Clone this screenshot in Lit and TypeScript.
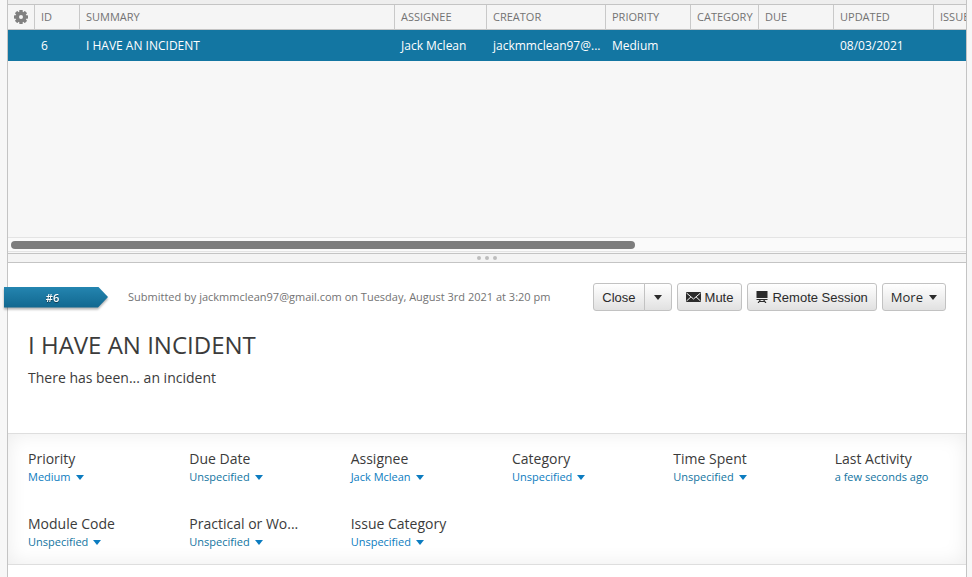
import { LitElement, html, css, svg, nothing } from "lit";
import { customElement } from "lit/decorators.js";

interface Column {
  title: string;
  value: string;
  width: number;
}

interface Field {
  label: string;
  value: string;
  tone: "bright" | "deep";
  menu: boolean;
}

const COLUMNS: Column[] = [
  { title: "ID", value: "6", width: 45 },
  { title: "SUMMARY", value: "I HAVE AN INCIDENT", width: 315 },
  { title: "ASSIGNEE", value: "Jack Mclean", width: 92 },
  { title: "CREATOR", value: "jackmmclean97@...", width: 119 },
  { title: "PRIORITY", value: "Medium", width: 85 },
  { title: "CATEGORY", value: "", width: 68 },
  { title: "DUE", value: "", width: 75 },
  { title: "UPDATED", value: "08/03/2021", width: 100 },
  { title: "ISSUE CATEGORY", value: "", width: 530 },
];

const FIELDS: Field[] = [
  { label: "Priority", value: "Medium", tone: "bright", menu: true },
  { label: "Due Date", value: "Unspecified", tone: "deep", menu: true },
  { label: "Assignee", value: "Jack Mclean", tone: "bright", menu: true },
  { label: "Category", value: "Unspecified", tone: "bright", menu: true },
  { label: "Time Spent", value: "Unspecified", tone: "deep", menu: true },
  { label: "Last Activity", value: "a few seconds ago", tone: "deep", menu: false },
  { label: "Module Code", value: "Unspecified", tone: "deep", menu: true },
  { label: "Practical or Wo...", value: "Unspecified", tone: "deep", menu: true },
  { label: "Issue Category", value: "Unspecified", tone: "bright", menu: true },
];

const TEETH = [0, 45, 90, 135, 180, 225, 270, 315];

const gearIcon = html`<svg class="gear" width="14" height="14" viewBox="0 0 14 14" aria-hidden="true">
  ${TEETH.map((a) => svg`<rect x="5.3" y="0" width="3.4" height="4" rx="0.6" transform="rotate(${a} 7 7)"></rect>`)}
  <circle cx="7" cy="7" r="3.7" fill="none" stroke="currentColor" stroke-width="3.4"></circle>
</svg>`;

const mailIcon = html`<svg width="15" height="10" viewBox="0 0 15 10" aria-hidden="true">
  <rect width="15" height="10" fill="#2b2b2b"></rect>
  <path d="M0.5 1 L7.5 7 L14.5 1 M0.5 9 L5 4.8 M14.5 9 L10 4.8" fill="none" stroke="#f4f4f4" stroke-width="1"></path>
</svg>`;

const screenIcon = html`<svg width="12" height="12" viewBox="0 0 11 12" aria-hidden="true">
  <path d="M0 0H11V7H0Z M0 8H11V9H0Z M3 9H4.4L3.6 10H7.4L6.6 9H8L10 12H8.6L8 11H3L2.4 12H1Z" fill="#2b2b2b"></path>
</svg>`;

const caret = html`<svg class="caret" width="8" height="5" viewBox="0 0 8 5" aria-hidden="true">
  <path d="M0 0H8L4 5Z" fill="currentColor"></path>
</svg>`;

@customElement("app-root")
export class AppRoot extends LitElement {
  static styles = css`
    :host {
      display: block;
      min-height: 100vh;
      box-sizing: border-box;
      padding: 0 5px 0 7px;
      background: #f7f7f7;
      color: #3b3b3b;
      font-family: "Open Sans", "Noto Sans", sans-serif;
    }
    .frame {
      display: flex;
      flex-direction: column;
      min-height: 100vh;
      box-sizing: border-box;
      border: solid #c4c4c4;
      border-width: 0 1px;
    }
    button {
      margin: 0;
      padding: 0;
      border: 0;
      background: none;
      font: inherit;
      color: inherit;
      cursor: pointer;
    }
    .list {
      display: flex;
      flex-direction: column;
      border-top: 4px solid #eeeeee;
    }
    .rows {
      height: 232px;
      overflow: hidden;
      border-top: 1px solid #c4c4c4;
    }
    table {
      table-layout: fixed;
      border-collapse: separate;
      border-spacing: 0;
    }
    .tool {
      width: 27px;
    }
    th {
      height: 25px;
      box-sizing: border-box;
      padding: 0 0 0 6px;
      border-right: 1px solid #c9c9c9;
      border-bottom: 1px solid #c4c4c4;
      background: #f5f5f5;
      color: #737373;
      font-size: 11px;
      line-height: 24px;
      font-weight: 400;
      text-align: left;
      white-space: nowrap;
    }
    td {
      height: 31px;
      padding: 0 0 0 6px;
      background: #1376a2;
      color: #ffffff;
      font-size: 12px;
      line-height: 30px;
      white-space: nowrap;
    }
    .tool button {
      display: block;
    }
    .gear {
      display: block;
      fill: #808080;
      color: #808080;
    }
    .track {
      padding: 3px 3px 2px;
      border: solid #e4e4e4;
      border-width: 1px 0;
      background: #fafafa;
    }
    .thumb {
      width: 624px;
      max-width: 66%;
      height: 8px;
      border-radius: 4px;
      background: #7d7d7d;
    }
    .splitter {
      display: flex;
      justify-content: center;
      align-items: center;
      gap: 4px;
      height: 8px;
      margin-top: 1px;
      border: solid #c4c4c4;
      border-width: 1px 0;
      background: #f4f4f4;
    }
    .dot {
      width: 4px;
      height: 4px;
      border-radius: 2px;
      background: #bdbdbd;
    }
    .detail {
      flex: 1;
      background: #ffffff;
    }
    .bar {
      display: flex;
      align-items: center;
      padding: 20px 20px 0 0;
    }
    .ribbon {
      flex: none;
      margin-left: -4px;
      filter: drop-shadow(0 2px 1px rgba(0, 0, 0, 0.3));
    }
    .tag {
      width: 104px;
      height: 21px;
      box-sizing: border-box;
      padding-right: 7px;
      background: linear-gradient(#2485b0, #11678f);
      clip-path: polygon(0 0, 94px 0, 100% 50%, 94px 100%, 0 100%);
      color: #ffffff;
      font-size: 11px;
      line-height: 21px;
      font-weight: 600;
      text-align: center;
      text-shadow: 0 1px 1px rgba(0, 0, 0, 0.5);
    }
    .submitted {
      flex: 1;
      margin: 0 0 0 20px;
      color: #737373;
      font-size: 11px;
      line-height: 16px;
    }
    .actions {
      display: flex;
      gap: 5px;
      color: #2b2b2b;
      font-family: "Liberation Sans", Arial, sans-serif;
      font-size: 13px;
    }
    .group {
      display: flex;
    }
    .actions button {
      display: flex;
      align-items: center;
      gap: 4px;
      height: 28px;
      padding: 0 8px;
      border: 1px solid #c2c2c2;
      border-radius: 3px;
      background: linear-gradient(#ffffff, #e1e1e1);
      white-space: nowrap;
    }
    .actions .first {
      border-radius: 3px 0 0 3px;
    }
    .actions .last {
      margin-left: -1px;
      padding: 0 9px;
      border-radius: 0 3px 3px 0;
    }
    .actions .more {
      gap: 6px;
      font-family: "Open Sans", "Noto Sans", sans-serif;
    }
    h1 {
      margin: 16px 20px 0;
      font-size: 24px;
      line-height: 36px;
      font-weight: 400;
    }
    .body {
      margin: 5px 20px 45px;
      font-size: 14px;
      line-height: 20px;
    }
    .fields {
      display: grid;
      grid-template-columns: repeat(6, minmax(0, 1fr));
      column-gap: 48px;
      row-gap: 29px;
      margin: 0;
      padding: 15px 18px 14px 20px;
      border: solid #dedede;
      border-width: 1px 0;
      box-shadow: inset 0 0 20px rgba(0, 0, 0, 0.08);
    }
    .field {
      white-space: nowrap;
    }
    dt {
      font-size: 14px;
      line-height: 20px;
    }
    dd {
      margin: 0;
      font-size: 11px;
      line-height: 16px;
    }
    dd a,
    dd button {
      display: inline-flex;
      align-items: center;
      gap: 5px;
      text-decoration: none;
    }
    dd .caret {
      color: #0c7cc0;
    }
    .bright {
      color: #0c7cc0;
    }
    .deep {
      color: #11749f;
    }
  `;

  private field(f: Field) {
    return html`<div class="field">
      <dt>${f.label}</dt>
      <dd>
        ${f.menu
          ? html`<button class=${f.tone} type="button" aria-haspopup="menu">${f.value}${caret}</button>`
          : html`<a class=${f.tone} href="#activity">${f.value}</a>`}
      </dd>
    </div>`;
  }

  render() {
    const total = COLUMNS.reduce((sum, c) => sum + c.width, 27);
    return html`<main class="frame">
      <section class="list">
        <div class="rows">
          <table style="width:${total}px">
            <thead>
              <tr>
                <th class="tool"><button type="button" aria-label="Choose columns">${gearIcon}</button></th>
                ${COLUMNS.map((c) => html`<th scope="col" style="width:${c.width}px">${c.title}</th>`)}
              </tr>
            </thead>
            <tbody>
              <tr>
                <td></td>
                ${COLUMNS.map((c) => html`<td>${c.value || nothing}</td>`)}
              </tr>
            </tbody>
          </table>
        </div>
        <div class="track"><div class="thumb"></div></div>
      </section>
      <div class="splitter" role="separator">
        <span class="dot"></span><span class="dot"></span><span class="dot"></span>
      </div>
      <article class="detail">
        <header class="bar">
          <div class="ribbon"><div class="tag">#6</div></div>
          <p class="submitted">Submitted by jackmmclean97@gmail.com on Tuesday, August 3rd 2021 at 3:20 pm</p>
          <div class="actions">
            <div class="group">
              <button class="first" type="button">Close</button>
              <button class="last" type="button" aria-label="Close options">${caret}</button>
            </div>
            <button type="button">${mailIcon}Mute</button>
            <button type="button">${screenIcon}Remote Session</button>
            <button class="more" type="button">More${caret}</button>
          </div>
        </header>
        <h1>I HAVE AN INCIDENT</h1>
        <p class="body">There has been... an incident</p>
        <dl class="fields">${FIELDS.map((f) => this.field(f))}</dl>
      </article>
    </main>`;
  }
}
